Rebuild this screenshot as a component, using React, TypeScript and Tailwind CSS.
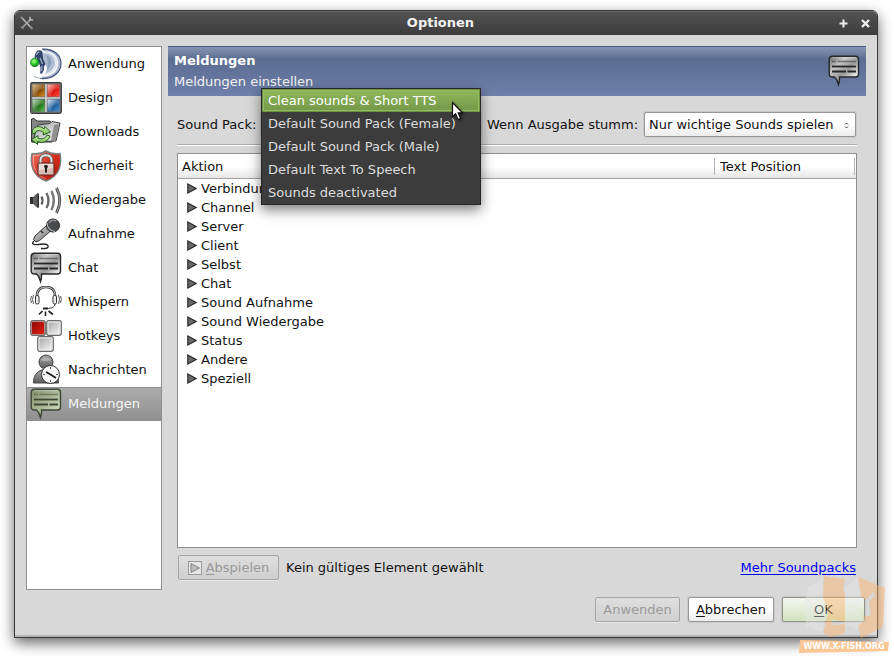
import { useState } from 'react'

// Shared gradients, referenced by id from every icon
function IconGradients(): React.ReactElement {
  return (
    <svg className="absolute h-0 w-0" aria-hidden="true">
      <defs>
        <linearGradient id="steel" x1="0" y1="0" x2="1" y2="1">
          <stop offset="0" stopColor="#66676a" />
          <stop offset=".3" stopColor="#c4c4c4" />
          <stop offset=".55" stopColor="#9a9a9a" />
          <stop offset=".85" stopColor="#fafafa" />
        </linearGradient>
        <linearGradient id="olive" x1="0" y1="0" x2="1" y2="1">
          <stop offset="0" stopColor="#7f8d6a" />
          <stop offset=".5" stopColor="#abb897" />
          <stop offset="1" stopColor="#dbe6c8" />
        </linearGradient>
        <linearGradient id="silver" x1="0" y1="0" x2="1" y2="1">
          <stop offset="0" stopColor="#a9abad" />
          <stop offset="1" stopColor="#f1f1f2" />
        </linearGradient>
        <linearGradient id="darkSteel" x1="0" y1="0" x2="0" y2="1">
          <stop offset="0" stopColor="#a8a8a8" />
          <stop offset="1" stopColor="#5c5c5c" />
        </linearGradient>
        <linearGradient id="red" x1="0" y1="0" x2="1" y2="1">
          <stop offset="0" stopColor="#ef7a68" />
          <stop offset=".5" stopColor="#d62f1c" />
          <stop offset="1" stopColor="#a81408" />
        </linearGradient>
        <linearGradient id="redKey" x1="0" y1="0" x2="1" y2="1">
          <stop offset="0" stopColor="#8f0808" />
          <stop offset="1" stopColor="#e0200f" />
        </linearGradient>
        <linearGradient id="blueTile" x1="0" y1="0" x2="1" y2="1">
          <stop offset="0" stopColor="#d6e6f5" />
          <stop offset=".5" stopColor="#1b5796" />
          <stop offset="1" stopColor="#4f96d6" />
        </linearGradient>
        <linearGradient id="greenTile" x1="0" y1="0" x2="1" y2="1">
          <stop offset="0" stopColor="#b9d8b2" />
          <stop offset=".5" stopColor="#1c6a17" />
          <stop offset="1" stopColor="#62c052" />
        </linearGradient>
        <linearGradient id="redTile" x1="0" y1="0" x2="1" y2="1">
          <stop offset="0" stopColor="#ffb3a6" />
          <stop offset=".5" stopColor="#d80d04" />
          <stop offset="1" stopColor="#ff5646" />
        </linearGradient>
        <linearGradient id="amberTile" x1="0" y1="0" x2="1" y2="1">
          <stop offset="0" stopColor="#d9b377" />
          <stop offset=".5" stopColor="#7d4700" />
          <stop offset="1" stopColor="#d98d20" />
        </linearGradient>
        <linearGradient id="leaf" x1="0" y1="0" x2="0" y2="1">
          <stop offset="0" stopColor="#c9f0a8" />
          <stop offset="1" stopColor="#6cb84b" />
        </linearGradient>
        <radialGradient id="led" cx=".4" cy=".35" r=".7">
          <stop offset="0" stopColor="#b4ff9a" />
          <stop offset=".5" stopColor="#2fd22a" />
          <stop offset="1" stopColor="#0a7a14" />
        </radialGradient>
      </defs>
    </svg>
  )
}

function Icon({ children }: { children: React.ReactNode }): React.ReactElement {
  return (
    <svg viewBox="0 0 32 32" className="h-8 w-8 shrink-0" fill="none" aria-hidden="true">
      {children}
    </svg>
  )
}

function AppIcon() {
  return (
    <Icon>
      <path d="M13 2C23 1.500 29.500 7.500 29.500 15.500C29.500 24 22 30 12 29.800" stroke="#aab6cc" strokeWidth="2.600" />
      <path d="M12 1.200C24 .5 31 7.500 31 15.500C31 25 22 31.500 10 30.500" stroke="#3f5276" strokeWidth="1.200" />
      <path d="M14 4.500C21 5 26.500 9 26.500 15C26.500 20.500 22 24.500 15 26" stroke="#dfe5ee" strokeWidth="2" />
      <path d="M13 5C20 5 25 9 25 15C25 20 21 24 15 25.500C18 22 17 19 15.500 17L13.500 13Z" fill="#aebad2" />
      <path d="M16 7C20 8.500 22.500 12 20.500 17C19.500 20 18 21.500 16.500 23C18 18 18.500 12 16 7Z" fill="#8c9cbb" />
      <path d="M6.500 3.500C8 1.800 11.500 1.600 12.500 4L13.200 11L15.500 16L14 18.500V22L12 25.500H10C11 22 10.500 18 9 15L7 13.500V9L5 11C4 9 5 5.500 6.500 3.500Z" fill="#33446a" />
      <path d="M6.500 7C7 5 8 4 9.500 4M10 10L12.500 16M11.800 18V23" stroke="#a7b5cd" strokeWidth="1.200" />
      <circle cx="4.700" cy="14.500" r="4.200" fill="url(#led)" stroke="#12662a" strokeWidth=".7" />
      <path d="M4 28.500C7 29.800 9 30.200 12 30.200" stroke="#8a99b5" strokeWidth=".8" />
    </Icon>
  )
}

function DesignIcon() {
  return (
    <Icon>
      <rect x=".7" y=".7" width="30.600" height="30.600" rx="1.500" fill="#777" stroke="#3a3a3a" strokeWidth="1.200" />
      <path d="M2 16H30M16 2V30" stroke="#d0d0d0" strokeWidth="1.600" />
      <rect x="2.500" y="2.500" width="12" height="12" fill="url(#amberTile)" />
      <rect x="17.500" y="2.500" width="12" height="12" fill="url(#redTile)" />
      <rect x="2.500" y="17.500" width="12" height="12" fill="url(#greenTile)" />
      <rect x="17.500" y="17.500" width="12" height="12" fill="url(#blueTile)" />
      <path d="M3 3H14V6Q7 7 6 14H3ZM18 3H29V6Q22 7 21 14H18ZM3 18H14V21Q7 22 6 29H3ZM18 18H29V21Q22 22 21 29H18Z" fill="#fff" opacity=".2" />
    </Icon>
  )
}

function DownloadsIcon() {
  return (
    <Icon>
      <path d="M1.500 26V3L4 2.500L7 5H20L22 7V26Z" fill="#858585" stroke="#363636" />
      <path d="M2.500 26L8 9L20 7.500L22 5.500L30 7L26 25Z" fill="url(#silver)" stroke="#3f3f3f" />
      <path d="M24 9L21 25L26 24L29 8Z" fill="#6f6f6f" opacity=".7" />
      <path d="M2 17C2 10 10 9 14 13L15 10.500L20.500 16L13 19L13.500 16.500C10 13.500 5 14.500 5 18Z" fill="url(#leaf)" stroke="#285c20" />
      <path d="M20 20C18 26 12 27.500 7.500 25.500V28.500L1.500 23.500L8 19.500V22C12 24 16 22 17 19Z" fill="url(#leaf)" stroke="#285c20" />
    </Icon>
  )
}

function SecurityIcon() {
  return (
    <Icon>
      <path d="M16 1C12 3.500 7 4 2 3.500C0 14 2 26 16 31C30 26 32 14 30 3.500C25 4 20 3.500 16 1Z" fill="url(#red)" stroke="#7b8285" strokeWidth="1.500" />
      <path d="M16 3C12 5.500 8 5.800 3.600 5.500C2.500 14 4 24.500 16 29" stroke="#fff" opacity=".4" />
      <path d="M10.500 14V10C10.500 3.500 21.500 3.500 21.500 10V14" stroke="#57585a" strokeWidth="3.600" />
      <path d="M10.500 14V10C10.500 3.500 21.500 3.500 21.500 10V14" stroke="#e4e4e4" strokeWidth="2" />
      <rect x="8" y="13" width="16" height="12" rx="1" fill="#d9b9b3" stroke="#5c2620" />
      <path d="M9 14H23V18L9 20Z" fill="#fff" opacity=".45" />
      <path d="M14 16.500C14 14.500 18 14.500 18 16.500L17 18.500V22.500H15V18.500Z" fill="#1d1d1d" />
    </Icon>
  )
}

function PlaybackIcon() {
  return (
    <Icon>
      <path d="M0 13H3V20H0Z" fill="#2f2f2f" />
      <path d="M3.500 13L7.500 9.500V23.500L3.500 20Z" fill="#5f5f5f" stroke="#2f2f2f" strokeWidth=".6" />
      <path d="M7.500 9.500H9V23.500H7.500Z" fill="#2f2f2f" />
      <path d="M11.500 12.500Q13.500 16.500 11.500 20.500" stroke="#5a5a5a" strokeWidth="2.200" />
      <path d="M16.500 9Q20.500 16.500 16.500 24" stroke="#6a6a6a" strokeWidth="2.400" />
      <path d="M21.500 7Q26 16.500 21.500 26" stroke="#777" strokeWidth="2.400" />
      <path d="M26.500 4Q33 16.500 26.500 29" stroke="#333" strokeWidth="2.800" />
      <path d="M26.500 4Q33 16.500 26.500 29" stroke="#999" strokeWidth="1.400" />
    </Icon>
  )
}

function RecordIcon() {
  return (
    <Icon>
      <path d="M18 6L5 18L3.500 21.500L6 24L9.500 22.500L23 11Z" fill="url(#steel)" stroke="#2c2c2c" />
      <circle cx="23" cy="7.500" r="6.500" fill="#4a4b4e" stroke="#232323" />
      <path d="M19 5C21 2 24 2 26 3" stroke="#94969a" strokeWidth="1.500" />
      <path d="M17 5C17 9 20 13 25 13.500" stroke="#b9b9b9" strokeWidth="1.200" />
      <path d="M11 13L13 15" stroke="#222" strokeWidth="1.500" />
      <path d="M4 23C1 26 3 27 8 26.500C14 25.500 19 26 18 29C17.500 31 13 30.500 11 30.500" stroke="#222" strokeWidth="1.300" />
    </Icon>
  )
}

function BubbleIcon({ fill, stroke }: { fill: string; stroke: string }) {
  return (
    <Icon>
      <path d="M4.500 1.200H27.500Q30.500 1.200 30.500 4.200V19Q30.500 22 27.500 22H11.500Q11.800 26 10.500 29.500Q9.500 24.500 6.500 22H4.500Q1.200 22 1.200 19V4.200Q1.200 1.200 4.500 1.200Z" fill={fill} stroke={stroke} strokeWidth="1.400" />
      <path d="M4 2.700H28" stroke="#fff" opacity=".35" />
      <path d="M4 6.500H8M9.500 6.500H28" stroke={stroke} strokeWidth="1.300" opacity=".5" />
      <path d="M4 11.500H28" stroke={stroke} strokeWidth="1.800" />
      <path d="M4 16.500H18M19.500 16.500H28" stroke={stroke} strokeWidth="1.800" />
    </Icon>
  )
}

function WhisperIcon() {
  return (
    <Icon>
      <path d="M7 10C7 3 11 1 16 1S25 3 25 10" stroke="#3b3b3b" strokeWidth="2.600" />
      <path d="M7 10C7 3 11 1.200 16 1.200S25 3 25 10" stroke="#d8d8d8" strokeWidth=".9" />
      <rect x="5.500" y="9.500" width="3.500" height="8.500" rx="1.500" fill="#eee" stroke="#333" />
      <rect x="23" y="9.500" width="3.500" height="8.500" rx="1.500" fill="#eee" stroke="#333" />
      <path d="M3.500 9Q1.500 13.500 3.500 18M1.500 10Q-.2 13.500 1.500 17M28.500 9Q30.500 13.500 28.500 18M30.500 10Q32.200 13.500 30.500 17" stroke="#555" />
      <path d="M25 18C25 21 21 22.500 17 22.500" stroke="#333" />
      <path d="M13 22.500H18" stroke="#222" strokeWidth="2" />
      <path d="M12.500 25L9 28.500M15.500 25.500V30M18.500 25L23 28.500" stroke="#222" strokeWidth="1.600" />
    </Icon>
  )
}

function HotkeysIcon() {
  return (
    <Icon>
      <rect x=".7" y=".7" width="14.600" height="14.600" rx="2" fill="#c99" stroke="#6b6b6b" strokeWidth="1.200" />
      <rect x="2" y="2" width="12" height="12" rx="1" fill="url(#redKey)" />
      <rect x="16.700" y=".7" width="14.600" height="14.600" rx="2" fill="#eee" stroke="#6b6b6b" strokeWidth="1.200" />
      <rect x="18.500" y="2.500" width="11" height="11" rx="1" fill="url(#silver)" />
      <rect x="7.700" y="16.700" width="15.600" height="14.600" rx="2" fill="#eee" stroke="#6b6b6b" strokeWidth="1.200" />
      <rect x="9.500" y="18.500" width="12" height="11" rx="1" fill="url(#silver)" />
    </Icon>
  )
}

function MessagesIcon() {
  return (
    <Icon>
      <path d="M3.500 29C3.500 22 6 18 12 16H20C25 18 28.500 21 28.500 29Z" fill="url(#darkSteel)" stroke="#444" />
      <circle cx="16" cy="8" r="7" fill="url(#darkSteel)" stroke="#3b3b3b" />
      <path d="M10.500 6Q16 1 21.500 6Q16 8 10.500 6Z" fill="#ccc" opacity=".6" />
      <circle cx="20.500" cy="20.500" r="9" fill="#f7f7f7" stroke="#333" />
      <path d="M20.500 13V15M20.500 26V28M13 20.500H15M26 20.500H28" stroke="#555" />
      <path d="M16 18L20.500 20.500L26 24" stroke="#111" strokeWidth="1.500" />
    </Icon>
  )
}

function ToolsIcon() {
  return (
    <svg viewBox="0 0 14 14" className="h-[14px] w-[14px]" fill="none" aria-hidden="true">
      <path d="M2.500 2.500L11 11.500" stroke="#bdbdbd" strokeWidth="1.500" />
      <path d="M1 1L3 3M10 10.500L12.500 13" stroke="#8d8d8d" strokeWidth="2" />
      <path d="M11 3L2 12" stroke="#a5a5a5" strokeWidth="1.600" />
      <path d="M10 .8V3.800H13.200" stroke="#c8c8c8" strokeWidth="1.300" />
      <path d="M.8 10.500L3.500 13" stroke="#8a8a8a" strokeWidth="1.300" />
    </svg>
  )
}

const pages = [
  { name: 'Anwendung', icon: <AppIcon /> },
  { name: 'Design', icon: <DesignIcon /> },
  { name: 'Downloads', icon: <DownloadsIcon /> },
  { name: 'Sicherheit', icon: <SecurityIcon /> },
  { name: 'Wiedergabe', icon: <PlaybackIcon /> },
  { name: 'Aufnahme', icon: <RecordIcon /> },
  { name: 'Chat', icon: <BubbleIcon fill="url(#steel)" stroke="#262729" /> },
  { name: 'Whispern', icon: <WhisperIcon /> },
  { name: 'Hotkeys', icon: <HotkeysIcon /> },
  { name: 'Nachrichten', icon: <MessagesIcon /> },
  { name: 'Meldungen', icon: <BubbleIcon fill="url(#olive)" stroke="#3d4634" /> },
]

const soundPacks = [
  'Clean sounds & Short TTS',
  'Default Sound Pack (Female)',
  'Default Sound Pack (Male)',
  'Default Text To Speech',
  'Sounds deactivated',
]

const actions = [
  'Verbindung',
  'Channel',
  'Server',
  'Client',
  'Selbst',
  'Chat',
  'Sound Aufnahme',
  'Sound Wiedergabe',
  'Status',
  'Andere',
  'Speziell',
]

const button =
  'h-[25px] rounded-[2px] border border-[#979797] bg-linear-to-b from-white from-50% to-[#ececec] shadow-[0_0_0_1px_#c9c9c9]'
const disabledButton =
  'h-[25px] rounded-[2px] border border-[#a5a5a5] bg-linear-to-b from-[#dedede] to-[#d0d0d0] text-[#999] shadow-[0_1px_0_#e8e8e8]'

function Sidebar() {
  const [selected, setSelected] = useState('Meldungen')
  return (
    <nav className="w-[136px] shrink-0 border border-[#8f8f8f] bg-white">
      {pages.map((page) => (
        <button
          key={page.name}
          onClick={() => setSelected(page.name)}
          className={
            page.name === selected
              ? 'flex h-[34px] w-full items-center gap-[6px] bg-linear-to-b from-[#adadad] to-[#8f8f8f] pl-[3px] text-left text-[#f5f5f5] shadow-[inset_0_1px_0_#8c8c8c]'
              : 'flex h-[34px] w-full items-center gap-[6px] pl-[3px] text-left'
          }
        >
          {page.icon}
          {page.name}
        </button>
      ))}
    </nav>
  )
}

function SoundPackSelect() {
  const [pack, setPack] = useState(soundPacks[0])
  return (
    <div className="relative w-[220px] shrink-0">
      <select
        id="sound-pack"
        value={pack}
        onChange={(e) => setPack(e.target.value)}
        className={`${button} block w-full appearance-none px-1`}
      >
        {soundPacks.map((name) => (
          <option key={name}>{name}</option>
        ))}
      </select>

      {/* Open list */}
      <ul
        role="listbox"
        aria-label="Sound Pack"
        className="absolute -top-6 left-0 z-20 w-full border border-[#262626] bg-[#3c3c3c] text-[#dcdcdc] shadow-[0_5px_12px_rgba(0,0,0,0.5)]"
      >
        {soundPacks.map((name) => (
          <li
            key={name}
            role="option"
            aria-selected={name === pack}
            onClick={() => setPack(name)}
            className={
              name === pack
                ? 'flex h-[23px] items-center border border-[#6b9440] bg-linear-to-b from-[#8fb85a] to-[#74994a] px-[5px] text-white shadow-[inset_0_0_0_1px_#94bb63]'
                : 'flex h-[23px] items-center px-[6px]'
            }
          >
            {name}
          </li>
        ))}
      </ul>

      {/* Pointer */}
      <svg viewBox="0 0 13 21" className="absolute -top-3 left-[190px] z-30 h-[21px] w-[13px] drop-shadow-[1px_1px_1px_rgba(0,0,0,0.5)]" aria-hidden="true">
        <path d="M1.500 2.500V16.500L4.600 13.700L7 19.500L9.600 18.400L7.200 12.800H11.500Z" fill="#fff" stroke="#111" strokeWidth="1.200" />
      </svg>
    </div>
  )
}

function ActionTable() {
  return (
    <div className="flex-1 border border-[#8f8f8f] bg-white">
      <table className="w-full table-fixed border-collapse text-left">
        <thead>
          <tr className="h-[25px] bg-linear-to-b from-white from-50% to-[#e4e4e4] shadow-[inset_0_-1px_0_#a3a3a3]">
            <th className="py-0 pl-1 font-normal">Aktion</th>
            <th className="w-[142px] p-0 font-normal">
              <div className="mr-px h-[17px] border-x border-[#b5b5b5] pl-[5px] leading-[17px]">Text Position</div>
            </th>
          </tr>
        </thead>
        <tbody>
          {actions.map((action) => (
            <tr key={action} className="h-[19px]">
              <td className="p-0 pl-[9px]">
                <div className="flex items-center gap-1 leading-[19px]">
                  <svg viewBox="0 0 10 11" className="h-[11px] w-[10px]" aria-hidden="true">
                    <path d="M.8 1L9 5.500L.8 10Z" fill="#6a6a6a" stroke="#2b2b2b" strokeWidth="1.200" />
                  </svg>
                  {action}
                </div>
              </td>
              <td className="p-0" />
            </tr>
          ))}
        </tbody>
      </table>
    </div>
  )
}

function Watermark() {
  return (
    <div className="pointer-events-none absolute right-[5px] bottom-[5px] z-40 w-[90px]">
      <svg viewBox="0 0 90 65" className="block h-[65px] w-full" aria-hidden="true">
        <path d="M24 3L9 12L4 33L8 52L23 57L28 38L24 20ZM59 2L46 12V50L59 54L66 45L59 36L64 22Z" fill="#e8e8e8" opacity=".4" />
        <path d="M25 1L46 4L44 15L46 19V47L32 44L34 50L46 49V58L31 62L24 58L29 38L24 22Z" fill="#fcb26a" opacity=".45" />
        <path d="M59 2L86 13L84 52L62 63L59 50L66 46L64 42L72 40L70 28L76 19L74 17L67 25L62 22Z" fill="#fcb26a" opacity=".45" />
      </svg>
      <div className="relative flex h-[13px] items-center justify-center text-[8px] leading-none font-bold text-white">
        <svg viewBox="0 0 90 13" className="absolute inset-0 h-full w-full" aria-hidden="true">
          <path d="M1 0L90 2L89 11L0 13Z" fill="#fbc795" />
        </svg>
        <span className="relative">WWW.X-FISH.ORG</span>
      </div>
    </div>
  )
}

export default function App(): React.ReactElement {
  return (
    <div className="relative flex min-h-screen flex-col bg-white pt-[10px] pr-4 pb-5 pl-[14px] font-['DejaVu_Sans',sans-serif] text-[13px] leading-[18px] text-[#111]">
      <IconGradients />
      <div className="flex flex-1 flex-col rounded-t-md border border-[#383838] bg-[#d8d8d8] shadow-[0_5px_14px_rgba(0,0,0,0.6)]">
        {/* Title bar */}
        <header className="flex h-6 items-center rounded-t-[5px] border-t border-[#6a6a6a] bg-linear-to-b from-[#525252] to-[#3d3d3d] pr-[7px] pb-px pl-[5px] text-[#f2f2f2]">
          <ToolsIcon />
          <h1 className="flex-1 pl-2 text-center font-bold">Optionen</h1>
          <div className="flex gap-[13px]">
            <button aria-label="Maximieren">
              <svg viewBox="0 0 9 9" className="h-[9px] w-[9px]" aria-hidden="true">
                <path d="M4.500 .5V8.500M.5 4.500H8.500" stroke="#eee" strokeWidth="2" />
              </svg>
            </button>
            <button aria-label="Schließen">
              <svg viewBox="0 0 9 9" className="h-[9px] w-[9px]" aria-hidden="true">
                <path d="M1 1L8 8M8 1L1 8" stroke="#eee" strokeWidth="2.400" />
              </svg>
            </button>
          </div>
        </header>

        <div className="flex flex-1 flex-col border-b-2 border-[#b4b4b4] px-[11px] pt-[11px] pb-[13px]">
          <div className="flex flex-1 gap-[6px]">
            <Sidebar />

            <main className="flex min-w-0 flex-1 flex-col">
              <div className="flex h-[50px] items-center justify-between border-t border-[#4d5c80] bg-linear-to-b from-[#8595b3] via-[#5b6d90] via-25% to-[#6f80ac] px-[6px] pb-[2px] text-[#f2f2f2]">
                <div className="leading-[21px]">
                  <h2 className="font-bold text-white">Meldungen</h2>
                  <p>Meldungen einstellen</p>
                </div>
                <BubbleIcon fill="url(#steel)" stroke="#262729" />
              </div>

              <div className="flex flex-1 flex-col px-[9px]">
                <div className="flex items-center pt-4 pb-[7px]">
                  <label htmlFor="sound-pack" className="w-[84px] shrink-0">Sound Pack:</label>
                  <SoundPackSelect />
                  <label htmlFor="muted" className="flex-1 pl-[6px]">Wenn Ausgabe stumm:</label>
                  <div className="relative mr-px w-[212px]">
                    <select id="muted" className={`${button} block w-full appearance-none px-1`}>
                      <option>Nur wichtige Sounds spielen</option>
                    </select>
                    <svg viewBox="0 0 5 7" className="pointer-events-none absolute top-[10px] right-[7px] h-[7px] w-[5px]" fill="none" aria-hidden="true">
                      <path d="M1 2.500L2.500 1L4 2.500M1 4.500L2.500 6L4 4.500" stroke="#444" />
                    </svg>
                  </div>
                </div>
                <hr className="mb-[7px] h-[2px] border-t border-b border-t-[#adadad] border-b-white" />

                <ActionTable />

                <div className="flex items-center gap-[7px] pt-[7px] pb-[10px]">
                  <button disabled className={`${disabledButton} ml-px flex w-[101px] items-center justify-center gap-1`}>
                    <svg viewBox="0 0 14 14" className="h-[14px] w-[14px]" aria-hidden="true">
                      <rect x=".5" y=".5" width="13" height="13" fill="#e6e6e6" stroke="#999" />
                      <path d="M3 2.500L11.500 7L3 11.500Z" fill="#bbb" stroke="#888" />
                    </svg>
                    <span><u className="underline-offset-2">A</u>bspielen</span>
                  </button>
                  <span>Kein gültiges Element gewählt</span>
                  <a href="#soundpacks" className="mr-px ml-auto text-[#0000f0] underline underline-offset-2">Mehr Soundpacks</a>
                </div>
              </div>
            </main>
          </div>

          <footer className="flex justify-end gap-2 pt-[7px] pr-px">
            <button disabled className={`${disabledButton} w-[85px]`}>Anwenden</button>
            <button className={`${button} w-[86px]`}><u className="underline-offset-2">A</u>bbrechen</button>
            <button className="h-[25px] w-[83px] rounded-[2px] border border-[#8f948a] bg-linear-to-b from-[#f4f7f0] to-[#d3e2bf] shadow-[0_0_0_1px_#c9c9c9]">
              <u className="underline-offset-2">O</u>K
            </button>
          </footer>
        </div>
      </div>
      <Watermark />
    </div>
  )
}
